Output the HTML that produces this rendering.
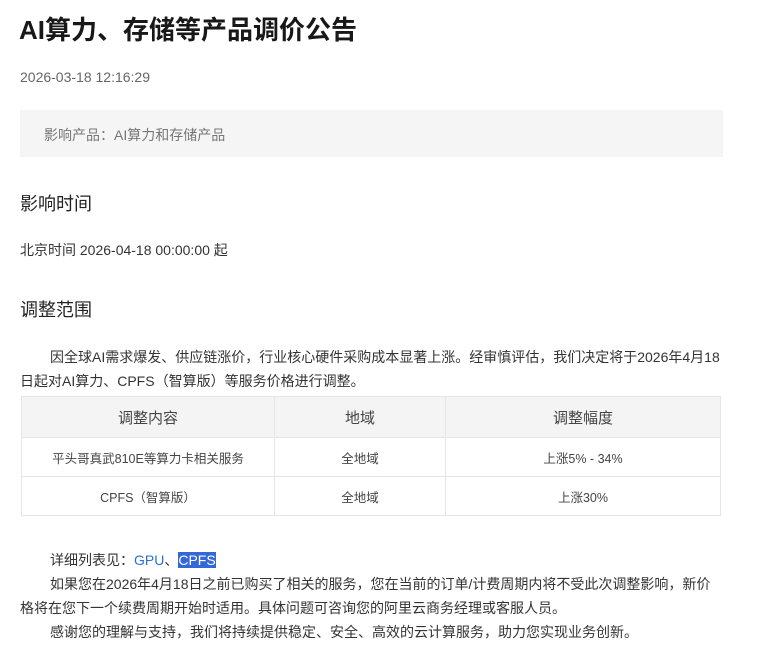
<!DOCTYPE html>
<html><head><meta charset="utf-8"><style>
body{margin:0;background:#fff;font-family:"Liberation Sans","Noto Sans CJK SC",sans-serif;color:#333;width:759px;height:666px;overflow:hidden;position:relative}
.a{position:absolute;white-space:nowrap}
h1{position:absolute;left:19px;top:12px;margin:0;font-size:26px;font-weight:bold;color:#181818;line-height:36px}
.box{position:absolute;left:20px;top:110px;width:703px;height:47px;background:#f5f5f5}
table{position:absolute;left:21px;top:396px;width:700px;border-collapse:collapse;font-size:12.5px;color:#444}
td,th{border:1px solid #e5e5e5;text-align:center;padding:0}
th{background:#f4f4f4;font-weight:normal;font-size:15px;height:40px;color:#444}
td{height:38px}
.p{position:absolute;left:20px;width:703px;font-size:14px;line-height:24px;color:#333}
</style></head><body>
<h1>AI算力、存储等产品调价公告</h1>
<div class="a" style="left:20px;top:69px;font-size:14px;color:#666">2026-03-18 12:16:29</div>
<div class="box"></div>
<div class="a" style="left:44px;top:125px;font-size:14px;color:#777">影响产品：AI算力和存储产品</div>
<div class="a" style="left:20px;top:190px;font-size:18px;color:#222">影响时间</div>
<div class="a" style="left:20px;top:240px;font-size:14px;color:#333">北京时间 2026-04-18 00:00:00 起</div>
<div class="a" style="left:20px;top:296px;font-size:18px;color:#222">调整范围</div>
<div class="p" style="top:345px;text-indent:30px">因全球AI需求爆发、供应链涨价，行业核心硬件采购成本显著上涨。经审慎评估，我们决定将于2026年4月18日起对AI算力、CPFS（智算版）等服务价格进行调整。</div>
<table>
<tr><th style="width:252px">调整内容</th><th style="width:170px">地域</th><th>调整幅度</th></tr>
<tr><td>平头哥真武810E等算力卡相关服务</td><td>全地域</td><td>上涨5% - 34%</td></tr>
<tr><td>CPFS（智算版）</td><td>全地域</td><td>上涨30%</td></tr>
</table>
<div class="a" style="left:50px;top:548px;font-size:14px;line-height:24px">详细列表见：<span style="color:#2a6fd6">GPU</span>、<span style="background:#3368d6;color:#fff">CPFS</span></div>
<div class="p" style="top:572px;text-indent:30px">如果您在2026年4月18日之前已购买了相关的服务，您在当前的订单/计费周期内将不受此次调整影响，新价格将在您下一个续费周期开始时适用。具体问题可咨询您的阿里云商务经理或客服人员。</div>
<div class="a" style="left:50px;top:620px;font-size:14px;line-height:24px">感谢您的理解与支持，我们将持续提供稳定、安全、高效的云计算服务，助力您实现业务创新。</div>
</body></html>
